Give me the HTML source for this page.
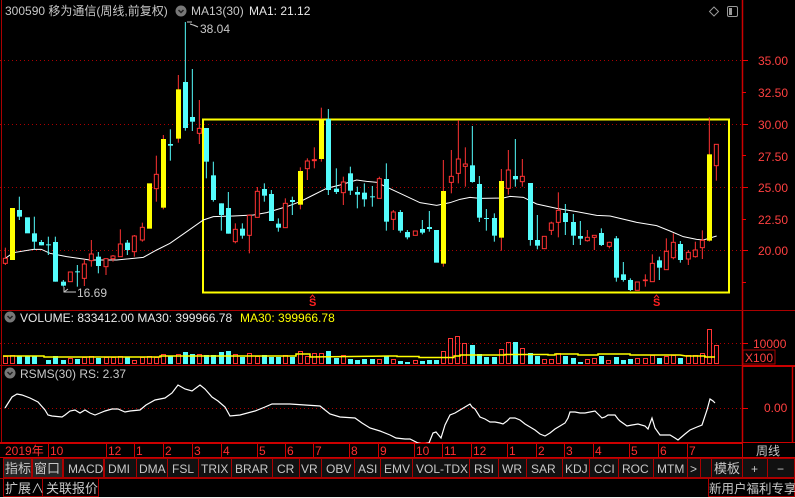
<!DOCTYPE html>
<html><head><meta charset="utf-8"><style>
html,body{margin:0;padding:0;background:#000;width:795px;height:498px;overflow:hidden}
svg{display:block}
text{font-family:"Liberation Sans","Noto Sans CJK SC",sans-serif;font-size:12px}
</style></head><body>
<svg width="795" height="498" viewBox="0 0 795 498" xmlns="http://www.w3.org/2000/svg">
<rect width="795" height="498" fill="#000"/>
<!-- frame lines -->
<line x1="1.5" y1="0" x2="1.5" y2="443" stroke="#a00" stroke-width="1"/>
<line x1="742.5" y1="0" x2="742.5" y2="443" stroke="#c00" stroke-width="1.5"/>
<line x1="0" y1="310.5" x2="795" y2="310.5" stroke="#a00"/>
<line x1="0" y1="365.5" x2="795" y2="365.5" stroke="#a00"/>
<line x1="742" y1="366" x2="795" y2="366" stroke="#c00" stroke-width="2"/>
<line x1="792.5" y1="366" x2="792.5" y2="443" stroke="#c00" stroke-width="1.5"/>
<line x1="0" y1="442.5" x2="795" y2="442.5" stroke="#c00"/>
<!-- dotted grid -->
<g stroke="#a00" stroke-dasharray="1,3">
<line x1="0" y1="60.5" x2="742" y2="60.5"/>
<line x1="0" y1="124.5" x2="742" y2="124.5"/>
<line x1="0" y1="187.5" x2="742" y2="187.5"/>
<line x1="0" y1="250.5" x2="742" y2="250.5"/>
<line x1="0" y1="343.5" x2="742" y2="343.5"/>
<line x1="0" y1="408.5" x2="742" y2="408.5"/>
</g>
<!-- axis ticks & labels -->
<g stroke="#e00"><line x1="742" y1="60.5" x2="748" y2="60.5"/><line x1="742" y1="92.5" x2="746" y2="92.5"/><line x1="742" y1="124.5" x2="748" y2="124.5"/><line x1="742" y1="155.5" x2="746" y2="155.5"/><line x1="742" y1="187.5" x2="748" y2="187.5"/><line x1="742" y1="219.5" x2="746" y2="219.5"/><line x1="742" y1="250.5" x2="748" y2="250.5"/><line x1="742" y1="282.5" x2="746" y2="282.5"/><line x1="742" y1="343.5" x2="748" y2="343.5"/><line x1="742" y1="408.5" x2="748" y2="408.5"/></g>
<g fill="#ff4040">
<text x="758" y="65">35.00</text><text x="758" y="97">32.50</text><text x="758" y="129">30.00</text><text x="758" y="161">27.50</text><text x="758" y="192">25.00</text><text x="758" y="224">22.50</text><text x="758" y="255">20.00</text>
<text x="753" y="348">10000</text><text x="745" y="362">X100</text><text x="764" y="412">0.00</text>
</g>
<rect x="743" y="350" width="32" height="14" fill="none" stroke="#a00"/>
<!-- header -->
<text x="5" y="15" fill="#c8c8c8">300590 移为通信(周线,前复权)</text>
<circle cx="181" cy="11" r="5.5" fill="#777"/><path d="M178.5 10 L181 12.5 L183.5 10" stroke="#222" stroke-width="1.5" fill="none"/>
<text x="191" y="15" fill="#c8c8c8">MA13(30)</text>
<text x="249" y="15" fill="#e8e8e8">MA1: 21.12</text>
<path d="M714 7 L718.5 11.5 L714 16 L709.5 11.5 Z" stroke="#999" fill="none"/>
<rect x="727.5" y="6.5" width="10" height="10" rx="1.5" stroke="#999" fill="none"/><rect x="729" y="8" width="3" height="7" fill="#999"/>
<text x="200" y="33" fill="#c8c8c8">38.04</text>
<path d="M187 22 L192 22 M190 24 Q194 25 198 27" stroke="#c8c8c8" fill="none"/>
<text x="77" y="297" fill="#c8c8c8">16.69</text>
<path d="M64 287 L64 292 L76 292 M64 292 L68 289" stroke="#c8c8c8" fill="none"/>
<!-- yellow box -->
<rect x="203" y="119.5" width="526" height="173" fill="none" stroke="#ff0" stroke-width="2"/>
<!-- S markers -->
<g fill="#ff2020" font-weight="bold"><text x="309" y="306" style="font-size:11px">S</text><text x="653" y="306" style="font-size:11px">S</text></g>
<path d="M310 298 L312.5 295 L315 298 M654 298 L656.5 295 L659 298" stroke="#ff2020" fill="none"/>
<!-- MA line -->
<g transform="translate(0,60) scale(0.33333)" fill="none" stroke="#fff" stroke-width="3">
<polyline points="16,595 40,578 100,568 124,568 150,580 200,590 270,600 350,600 430,592 470,570 510,550 560,515 610,480 640,470 700,468 760,465 800,458 860,440 900,425 940,405 980,385 1020,375 1070,360 1100,364 1140,368"/>
</g>
<g transform="translate(370,60) scale(0.33333)" fill="none" stroke="#fff" stroke-width="3">
<polyline points="30,372 90,400 150,428 200,436 240,428 270,418 300,412 330,415 400,414 420,409 460,412 500,432 560,445 620,455 680,466 720,468 800,487 860,497 900,513 940,530 980,538 1000,540 1040,528"/>
</g>
<!-- candles left (zoom coords) -->
<g transform="translate(0,60) scale(0.33333)" stroke-width="3">
<g stroke="#ff3333">
<line x1="16" y1="563" x2="16" y2="615"/><line x1="211" y1="636" x2="211" y2="665"/><line x1="253" y1="598" x2="253" y2="678"/><line x1="274" y1="540" x2="274" y2="620"/><line x1="318" y1="596" x2="318" y2="645"/><line x1="339" y1="585" x2="339" y2="605"/><line x1="361" y1="508" x2="361" y2="590"/><line x1="403" y1="525" x2="403" y2="590"/><line x1="427" y1="488" x2="427" y2="545"/><line x1="469" y1="287" x2="469" y2="425"/><line x1="490" y1="225" x2="490" y2="448"/><line x1="535" y1="45" x2="535" y2="248"/><line x1="598" y1="120" x2="598" y2="252"/><line x1="706" y1="490" x2="706" y2="550"/><line x1="748" y1="463" x2="748" y2="580"/><line x1="772" y1="381" x2="772" y2="472"/><line x1="856" y1="415" x2="856" y2="503"/><line x1="901" y1="322" x2="901" y2="448"/><line x1="922" y1="295" x2="922" y2="360"/><line x1="943" y1="262" x2="943" y2="325"/><line x1="964" y1="143" x2="964" y2="305"/><line x1="1030" y1="350" x2="1030" y2="435"/><line x1="1138" y1="350" x2="1138" y2="415"/>
</g>
<g stroke="#54fcfc">
<line x1="58" y1="410" x2="58" y2="480"/><line x1="103" y1="470" x2="103" y2="568"/><line x1="124" y1="540" x2="124" y2="556"/><line x1="145" y1="530" x2="145" y2="585"/><line x1="166" y1="530" x2="166" y2="665"/><line x1="190" y1="660" x2="190" y2="680"/><line x1="232" y1="615" x2="232" y2="680"/><line x1="295" y1="576" x2="295" y2="640"/><line x1="382" y1="540" x2="382" y2="585"/><line x1="511" y1="208" x2="511" y2="302"/><line x1="556" y1="-114" x2="556" y2="212"/><line x1="577" y1="27" x2="577" y2="213"/><line x1="619" y1="204" x2="619" y2="355"/><line x1="640" y1="305" x2="640" y2="425"/><line x1="664" y1="430" x2="664" y2="512"/><line x1="685" y1="396" x2="685" y2="521"/><line x1="727" y1="490" x2="727" y2="536"/><line x1="793" y1="370" x2="793" y2="425"/><line x1="814" y1="390" x2="814" y2="483"/><line x1="835" y1="475" x2="835" y2="515"/><line x1="877" y1="410" x2="877" y2="465"/><line x1="985" y1="147" x2="985" y2="405"/><line x1="1009" y1="325" x2="1009" y2="402"/><line x1="1051" y1="320" x2="1051" y2="405"/><line x1="1072" y1="380" x2="1072" y2="445"/><line x1="1093" y1="370" x2="1093" y2="440"/><line x1="1117" y1="378" x2="1117" y2="440"/>
</g>
<g fill="#000" stroke="#ff3333">
<rect x="10" y="595" width="12" height="15"/><rect x="205" y="636" width="12" height="29"/><rect x="247" y="612" width="12" height="43"/><rect x="268" y="582" width="12" height="20"/><rect x="312" y="596" width="12" height="24"/><rect x="333" y="588" width="12" height="8"/><rect x="355" y="552" width="12" height="38"/><rect x="397" y="528" width="12" height="47"/><rect x="421" y="502" width="12" height="38"/><rect x="463" y="343" width="12" height="43"/><rect x="592" y="205" width="12" height="15"/><rect x="700" y="508" width="12" height="37"/><rect x="742" y="466" width="12" height="60"/><rect x="766" y="394" width="12" height="78"/><rect x="850" y="430" width="12" height="73"/><rect x="916" y="303" width="12" height="23"/><rect x="937" y="299" width="12" height="3"/><rect x="1024" y="366" width="12" height="32"/><rect x="1132" y="356" width="12" height="59"/>
</g>
<g fill="#ffff00" stroke="none">
<rect x="30" y="444" width="15" height="156"/><rect x="441" y="370" width="15" height="136"/><rect x="483" y="237" width="15" height="206"/><rect x="528" y="88" width="15" height="148"/><rect x="894" y="333" width="15" height="101"/><rect x="957" y="177" width="15" height="120"/>
</g>
<g fill="#54fcfc" stroke="none">
<rect x="51" y="450" width="15" height="20"/><rect x="75" y="472" width="15" height="48"/><rect x="96" y="520" width="15" height="25"/><rect x="117" y="546" width="15" height="10"/><rect x="138" y="553" width="15" height="3"/><rect x="159" y="546" width="15" height="119"/><rect x="183" y="665" width="15" height="12"/><rect x="225" y="634" width="15" height="3"/><rect x="288" y="590" width="15" height="28"/><rect x="375" y="548" width="15" height="22"/><rect x="504" y="252" width="15" height="5"/><rect x="549" y="66" width="15" height="138"/><rect x="570" y="171" width="15" height="14"/><rect x="612" y="204" width="15" height="101"/><rect x="633" y="346" width="15" height="74"/><rect x="657" y="430" width="15" height="35"/><rect x="678" y="444" width="15" height="77"/><rect x="720" y="506" width="15" height="21"/><rect x="786" y="387" width="15" height="20"/><rect x="807" y="402" width="15" height="81"/><rect x="828" y="491" width="15" height="12"/><rect x="870" y="420" width="15" height="6"/><rect x="978" y="177" width="15" height="213"/><rect x="1002" y="386" width="15" height="10"/><rect x="1044" y="340" width="15" height="52"/><rect x="1065" y="396" width="15" height="8"/><rect x="1086" y="398" width="15" height="20"/><rect x="1110" y="409" width="15" height="3"/>
</g>
</g>
<!-- candles right -->
<g transform="translate(370,60) scale(0.33333)" stroke-width="3">
<g stroke="#ff3333">
<line x1="70" y1="450" x2="70" y2="510"/><line x1="136" y1="513" x2="136" y2="526"/><line x1="220" y1="300" x2="220" y2="620"/><line x1="244" y1="270" x2="244" y2="400"/><line x1="265" y1="180" x2="265" y2="370"/><line x1="286" y1="262" x2="286" y2="380"/><line x1="394" y1="327" x2="394" y2="572"/><line x1="415" y1="270" x2="415" y2="404"/><line x1="457" y1="297" x2="457" y2="380"/><line x1="523" y1="529" x2="523" y2="566"/><line x1="544" y1="485" x2="544" y2="525"/><line x1="565" y1="397" x2="565" y2="532"/><line x1="652" y1="510" x2="652" y2="545"/><line x1="673" y1="526" x2="673" y2="570"/><line x1="718" y1="545" x2="718" y2="565"/><line x1="802" y1="666" x2="802" y2="691"/><line x1="826" y1="643" x2="826" y2="680"/><line x1="847" y1="583" x2="847" y2="665"/><line x1="889" y1="535" x2="889" y2="630"/><line x1="910" y1="520" x2="910" y2="598"/><line x1="955" y1="570" x2="955" y2="615"/><line x1="976" y1="545" x2="976" y2="593"/><line x1="997" y1="511" x2="997" y2="597"/><line x1="1018" y1="172" x2="1018" y2="545"/><line x1="1039" y1="253" x2="1039" y2="362"/>
</g>
<g stroke="#54fcfc">
<line x1="49" y1="310" x2="49" y2="512"/><line x1="91" y1="450" x2="91" y2="518"/><line x1="112" y1="510" x2="112" y2="538"/><line x1="157" y1="480" x2="157" y2="523"/><line x1="178" y1="453" x2="178" y2="515"/><line x1="307" y1="198" x2="307" y2="368"/><line x1="328" y1="348" x2="328" y2="486"/><line x1="349" y1="447" x2="349" y2="512"/><line x1="373" y1="460" x2="373" y2="545"/><line x1="436" y1="237" x2="436" y2="380"/><line x1="481" y1="369" x2="481" y2="557"/><line x1="502" y1="465" x2="502" y2="568"/><line x1="586" y1="432" x2="586" y2="525"/><line x1="610" y1="462" x2="610" y2="555"/><line x1="631" y1="483" x2="631" y2="555"/><line x1="694" y1="505" x2="694" y2="558"/><line x1="739" y1="528" x2="739" y2="665"/><line x1="760" y1="606" x2="760" y2="665"/><line x1="781" y1="655" x2="781" y2="693"/><line x1="868" y1="590" x2="868" y2="660"/><line x1="931" y1="543" x2="931" y2="608"/>
</g>
<g fill="#000" stroke="#ff3333">
<rect x="64" y="456" width="12" height="22"/><rect x="130" y="513" width="12" height="13"/><rect x="238" y="349" width="12" height="18"/><rect x="259" y="297" width="12" height="43"/><rect x="280" y="312" width="12" height="7"/><rect x="409" y="330" width="12" height="55"/><rect x="451" y="349" width="12" height="16"/><rect x="517" y="529" width="12" height="37"/><rect x="538" y="489" width="12" height="22"/><rect x="559" y="451" width="12" height="36"/><rect x="646" y="532" width="12" height="10"/><rect x="667" y="526" width="12" height="6"/><rect x="712" y="547" width="12" height="12"/><rect x="796" y="666" width="12" height="25"/><rect x="820" y="660" width="12" height="2"/><rect x="841" y="610" width="12" height="55"/><rect x="883" y="574" width="12" height="55"/><rect x="904" y="547" width="12" height="46"/><rect x="949" y="577" width="12" height="20"/><rect x="970" y="570" width="12" height="20"/><rect x="991" y="541" width="12" height="22"/><rect x="1033" y="253" width="12" height="64"/>
</g>
<g fill="#ffff00" stroke="none">
<rect x="213" y="393" width="15" height="218"/><rect x="387" y="363" width="15" height="170"/><rect x="1011" y="283" width="15" height="259"/>
</g>
<g fill="#54fcfc" stroke="none">
<rect x="42" y="357" width="15" height="128"/><rect x="84" y="456" width="15" height="56"/><rect x="105" y="516" width="15" height="16"/><rect x="150" y="507" width="15" height="11"/><rect x="171" y="501" width="15" height="6"/><rect x="192" y="510" width="15" height="98"/><rect x="300" y="316" width="15" height="50"/><rect x="321" y="372" width="15" height="101"/><rect x="342" y="474" width="15" height="3"/><rect x="366" y="474" width="15" height="53"/><rect x="429" y="348" width="15" height="10"/><rect x="474" y="369" width="15" height="171"/><rect x="495" y="540" width="15" height="17"/><rect x="579" y="459" width="15" height="27"/><rect x="603" y="486" width="15" height="41"/><rect x="624" y="528" width="15" height="8"/><rect x="687" y="519" width="15" height="36"/><rect x="732" y="535" width="15" height="118"/><rect x="753" y="643" width="15" height="17"/><rect x="774" y="660" width="15" height="30"/><rect x="861" y="601" width="15" height="22"/><rect x="924" y="552" width="15" height="48"/>
</g>
</g>
<!-- volume panel -->
<circle cx="10" cy="317" r="5.5" fill="#777"/><path d="M7.5 316 L10 318.5 L12.5 316" stroke="#222" stroke-width="1.5" fill="none"/>
<text x="20" y="322" fill="#e8e8e8">VOLUME: 833412.00  MA30: 399966.78</text>
<text x="240" y="322" fill="#ffff00">MA30: 399966.78</text>
<g fill="#54fcfc">
<rect x="17" y="356" width="5" height="8"/><rect x="25" y="356" width="5" height="8"/><rect x="32" y="356" width="5" height="8"/><rect x="46" y="360" width="5" height="4"/><rect x="53" y="356" width="5" height="8"/><rect x="61" y="360" width="5" height="4"/><rect x="75" y="359" width="5" height="5"/><rect x="96" y="358" width="5" height="6"/><rect x="125" y="357" width="5" height="7"/><rect x="168" y="356" width="5" height="8"/><rect x="183" y="352" width="5" height="12"/><rect x="190" y="354" width="5" height="10"/><rect x="204" y="355" width="5" height="9"/><rect x="211" y="355" width="5" height="9"/><rect x="219" y="352" width="5" height="12"/><rect x="226" y="351" width="5" height="13"/><rect x="240" y="357" width="5" height="7"/><rect x="262" y="355" width="5" height="9"/><rect x="269" y="357" width="5" height="7"/><rect x="276" y="357" width="5" height="7"/><rect x="290" y="357" width="5" height="7"/><rect x="326" y="351" width="5" height="13"/><rect x="334" y="358" width="5" height="6"/><rect x="348" y="359" width="5" height="5"/><rect x="355" y="360" width="5" height="4"/><rect x="362" y="359" width="5" height="5"/><rect x="370" y="359" width="5" height="5"/><rect x="384" y="356" width="5" height="8"/><rect x="398" y="361" width="5" height="3"/><rect x="405" y="362" width="5" height="2"/><rect x="420" y="361" width="5" height="3"/><rect x="427" y="360" width="5" height="4"/><rect x="434" y="360" width="5" height="4"/><rect x="470" y="345" width="5" height="19"/><rect x="477" y="354" width="5" height="10"/><rect x="484" y="357" width="5" height="7"/><rect x="492" y="357" width="5" height="7"/><rect x="513" y="342" width="5" height="22"/><rect x="528" y="353" width="5" height="11"/><rect x="535" y="356" width="5" height="8"/><rect x="563" y="356" width="5" height="8"/><rect x="571" y="358" width="5" height="6"/><rect x="578" y="362" width="5" height="2"/><rect x="599" y="356" width="5" height="8"/><rect x="614" y="357" width="5" height="7"/><rect x="621" y="360" width="5" height="4"/><rect x="628" y="359" width="5" height="5"/><rect x="657" y="358" width="5" height="6"/><rect x="678" y="358" width="5" height="6"/></g>
<g fill="none" stroke="#ff3333">
<rect x="3.5" y="356.5" width="4" height="7"/><rect x="10.5" y="355.5" width="4" height="8"/><rect x="68.5" y="358.5" width="4" height="5"/><rect x="82.5" y="357.5" width="4" height="6"/><rect x="89.5" y="356.5" width="4" height="7"/><rect x="104.5" y="357.5" width="4" height="6"/><rect x="111.5" y="357.5" width="4" height="6"/><rect x="118.5" y="356.5" width="4" height="7"/><rect x="132.5" y="360.5" width="4" height="3"/><rect x="140.5" y="357.5" width="4" height="6"/><rect x="147.5" y="356.5" width="4" height="7"/><rect x="154.5" y="357.5" width="4" height="6"/><rect x="161.5" y="354.5" width="4" height="9"/><rect x="176.5" y="354.5" width="4" height="9"/><rect x="197.5" y="354.5" width="4" height="9"/><rect x="233.5" y="354.5" width="4" height="9"/><rect x="247.5" y="353.5" width="4" height="10"/><rect x="255.5" y="356.5" width="4" height="7"/><rect x="283.5" y="355.5" width="4" height="8"/><rect x="298.5" y="351.5" width="4" height="12"/><rect x="305.5" y="356.5" width="4" height="7"/><rect x="312.5" y="353.5" width="4" height="10"/><rect x="319.5" y="353.5" width="4" height="10"/><rect x="341.5" y="355.5" width="4" height="8"/><rect x="377.5" y="359.5" width="4" height="4"/><rect x="391.5" y="359.5" width="4" height="4"/><rect x="413.5" y="360.5" width="4" height="3"/><rect x="441.5" y="351.5" width="4" height="12"/><rect x="448.5" y="338.5" width="4" height="25"/><rect x="455.5" y="336.5" width="4" height="27"/><rect x="462.5" y="343.5" width="4" height="20"/><rect x="499.5" y="349.5" width="4" height="14"/><rect x="506.5" y="342.5" width="4" height="21"/><rect x="520.5" y="348.5" width="4" height="15"/><rect x="542.5" y="359.5" width="4" height="4"/><rect x="549.5" y="359.5" width="4" height="4"/><rect x="556.5" y="353.5" width="4" height="10"/><rect x="585.5" y="359.5" width="4" height="4"/><rect x="592.5" y="358.5" width="4" height="5"/><rect x="606.5" y="360.5" width="4" height="3"/><rect x="635.5" y="358.5" width="4" height="5"/><rect x="643.5" y="358.5" width="4" height="5"/><rect x="650.5" y="355.5" width="4" height="8"/><rect x="664.5" y="356.5" width="4" height="7"/><rect x="671.5" y="355.5" width="4" height="8"/><rect x="686.5" y="355.5" width="4" height="8"/><rect x="693.5" y="355.5" width="4" height="8"/><rect x="700.5" y="353.5" width="4" height="10"/><rect x="707.5" y="329.5" width="4" height="34"/><rect x="714.5" y="345.5" width="4" height="18"/></g>
<polyline points="3,356 44,356 44,357 160,357 160,356 296,356 296,354 310,354 310,357 390,356 397,356 397,356.5 419,356.5 419,357.5 454,357.5 454,356 460,356 460,355 505,355 505,354.5 548,354.5 548,355 555,355 555,354 578,354 578,355 598,355 598,354 630,354 630,355 680,355 686,356 705,356 705,357 715,357" fill="none" stroke="#ffff00" stroke-width="1.5"/>
<!-- RS panel -->
<circle cx="10" cy="373" r="5.5" fill="#777"/><path d="M7.5 372 L10 374.5 L12.5 372" stroke="#222" stroke-width="1.5" fill="none"/>
<text x="20" y="378" fill="#c8c8c8">RSMS(30)  RS: 2.37</text>
<polyline fill="none" stroke="#fff" stroke-width="1.2" points="5,408 12,397 17,394 22,395 30,398 38,402 45,410 48,415 52,416 62,417 65,415 70,411 75,410 80,413 85,410 90,413 95,415 100,413 105,411 112,409 118,409 125,412 130,411 140,410 146,405 155,400 165,398 172,393 178,385 185,389 192,391 200,385 205,389 212,397 218,401 225,407 230,416 240,415 255,411 265,407 272,404 290,404 305,405 320,406 330,414 340,417 355,418 362,423 370,428 380,431 390,435 396,438 405,439 410,439 418,443 423,444 429,443 433,433 436,432 441,438 445,425 450,415 455,413 460,410 465,407 470,404 472,407 475,409 480,417 485,419 490,422 495,422 500,423 503,424 507,421 510,418 515,418 520,420 525,424 530,427 535,430 540,434 545,436 550,433 555,429 560,426 565,423 568,418 570,412 575,412 580,413 585,413 590,412 595,411 598,414 602,418 605,417 608,415 615,415 618,419 620,421 627,426 632,425 638,424 645,426 648,429 652,418 655,428 660,435 670,435 675,438 678,440 685,434 690,430 697,427 702,425 707,410 710,399 713,401 715,403"/>
<!-- date row -->
<rect x="0" y="443" width="795" height="55" fill="#000"/>
<g stroke="#c00"><line x1="0" y1="443.5" x2="742" y2="443.5"/><line x1="0" y1="457.5" x2="795" y2="457.5"/><line x1="742.5" y1="443" x2="742.5" y2="458"/></g>
<g stroke="#c00">
<line x1="48.5" y1="444" x2="48.5" y2="457"/><line x1="106.5" y1="444" x2="106.5" y2="457"/><line x1="134.5" y1="444" x2="134.5" y2="457"/><line x1="163.5" y1="444" x2="163.5" y2="457"/><line x1="192.5" y1="444" x2="192.5" y2="457"/><line x1="221.5" y1="444" x2="221.5" y2="457"/><line x1="257.5" y1="444" x2="257.5" y2="457"/><line x1="285.5" y1="444" x2="285.5" y2="457"/><line x1="313.5" y1="444" x2="313.5" y2="457"/><line x1="349.5" y1="444" x2="349.5" y2="457"/><line x1="378.5" y1="444" x2="378.5" y2="457"/><line x1="414.5" y1="444" x2="414.5" y2="457"/><line x1="442.5" y1="444" x2="442.5" y2="457"/><line x1="471.5" y1="444" x2="471.5" y2="457"/><line x1="507.5" y1="444" x2="507.5" y2="457"/><line x1="536.5" y1="444" x2="536.5" y2="457"/><line x1="564.5" y1="444" x2="564.5" y2="457"/><line x1="593.5" y1="444" x2="593.5" y2="457"/><line x1="629.5" y1="444" x2="629.5" y2="457"/><line x1="658.5" y1="444" x2="658.5" y2="457"/><line x1="687.5" y1="444" x2="687.5" y2="457"/>
</g>
<g fill="#ff3030">
<text x="5" y="455">2019年</text><text x="50" y="455">10</text><text x="108" y="455">12</text><text x="136" y="455">1</text><text x="165" y="455">2</text><text x="194" y="455">3</text><text x="223" y="455">4</text><text x="259" y="455">5</text><text x="287" y="455">6</text><text x="315" y="455">7</text><text x="351" y="455">8</text><text x="380" y="455">9</text><text x="416" y="455">10</text><text x="444" y="455">11</text><text x="473" y="455">12</text><text x="509" y="455">1</text><text x="538" y="455">2</text><text x="566" y="455">3</text><text x="595" y="455">4</text><text x="631" y="455">5</text><text x="660" y="455">6</text><text x="689" y="455">7</text>
</g>
<text x="756" y="455" fill="#c8c8c8">周线</text>
<!-- tabs row -->
<g fill="#111" stroke="#a00">
<rect x="3.5" y="458.5" width="28" height="19" fill="#262626"/><rect x="32.5" y="458.5" width="30" height="19" fill="#262626"/>
<rect x="63.5" y="458.5" width="40" height="19"/><rect x="104.5" y="458.5" width="32" height="19"/><rect x="136.5" y="458.5" width="31" height="19"/><rect x="167.5" y="458.5" width="31" height="19"/><rect x="198.5" y="458.5" width="33" height="19"/><rect x="231.5" y="458.5" width="41" height="19"/><rect x="272.5" y="458.5" width="27" height="19"/><rect x="299.5" y="458.5" width="22" height="19"/><rect x="321.5" y="458.5" width="33" height="19"/><rect x="354.5" y="458.5" width="26" height="19"/><rect x="380.5" y="458.5" width="32" height="19"/><rect x="412.5" y="458.5" width="57" height="19"/><rect x="469.5" y="458.5" width="29" height="19"/><rect x="498.5" y="458.5" width="28" height="19"/><rect x="526.5" y="458.5" width="36" height="19"/><rect x="562.5" y="458.5" width="27" height="19"/><rect x="589.5" y="458.5" width="29" height="19"/><rect x="618.5" y="458.5" width="35" height="19"/><rect x="653.5" y="458.5" width="34" height="19"/><rect x="687.5" y="458.5" width="13" height="19"/><rect x="700.5" y="458.5" width="11" height="19"/><rect x="711.5" y="458.5" width="31" height="19"/><rect x="742.5" y="458.5" width="25" height="19"/><rect x="767.5" y="458.5" width="27" height="19"/>
</g>
<g fill="#c8c8c8" style="font-size:13px">
<text x="5" y="473" style="font-size:13px">指标</text><text x="34" y="473" style="font-size:13px">窗口</text>
<text x="68" y="473">MACD</text><text x="108" y="473">DMI</text><text x="139" y="473">DMA</text><text x="172" y="473">FSL</text><text x="201" y="473">TRIX</text><text x="235" y="473">BRAR</text><text x="277" y="473">CR</text><text x="301" y="473">VR</text><text x="326" y="473">OBV</text><text x="358" y="473">ASI</text><text x="384" y="473">EMV</text><text x="416" y="473">VOL-TDX</text><text x="474" y="473">RSI</text><text x="502" y="473">WR</text><text x="531" y="473">SAR</text><text x="565" y="473">KDJ</text><text x="594" y="473">CCI</text><text x="622" y="473">ROC</text><text x="657" y="473">MTM</text><text x="690" y="473">&gt;</text>
<text x="714" y="473" style="font-size:13px">模板</text><text x="751" y="473">+</text><text x="777" y="473">−</text>
</g>
<!-- bottom row -->
<g stroke="#a00" fill="none"><line x1="0" y1="478.5" x2="795" y2="478.5"/><rect x="3.5" y="478.5" width="39" height="18"/><rect x="42.5" y="478.5" width="56" height="18"/><rect x="708.5" y="478.5" width="86" height="18"/></g>
<g fill="#c8c8c8"><text x="5" y="493" style="font-size:13px">扩展∧</text><text x="46" y="493" style="font-size:13px">关联报价</text><text x="709" y="493" style="font-size:12.5px">新用户福利专享</text></g>
<rect x="0" y="497" width="795" height="1" fill="#eee"/>
</svg>
</body></html>
